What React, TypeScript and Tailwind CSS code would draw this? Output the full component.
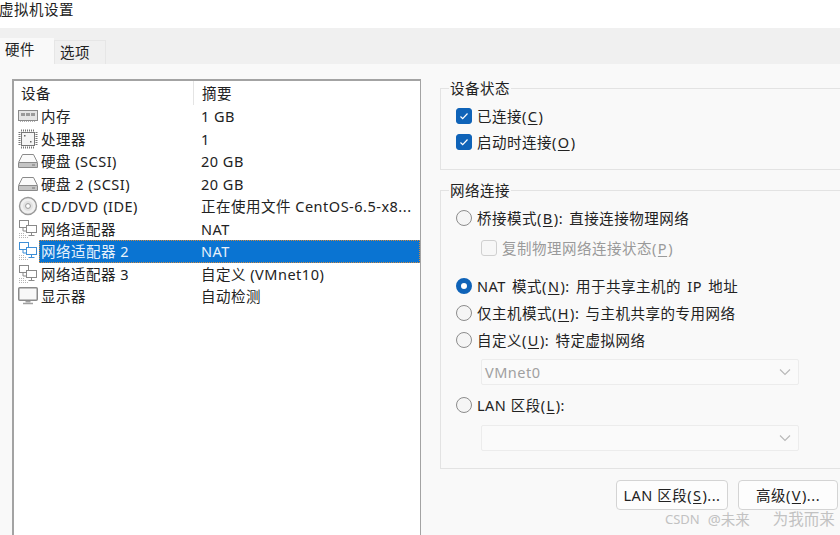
import type { ReactNode } from "react";

const FONT = "font-['Noto_Sans','Noto_Sans_CJK_SC',sans-serif]";

// ── Device icons ─────────────────────────────────────────────────────────

function MemoryIcon() {
  return (
    <svg width="20" height="14" viewBox="0 0 20 14" fill="none">
      <rect x="0.5" y="1.5" width="19" height="10" fill="#e4e4e4" stroke="#8a8a8a" />
      <rect x="3" y="4" width="4" height="3" fill="#9a9a9a" />
      <rect x="8" y="4" width="4" height="3" fill="#9a9a9a" />
      <rect x="13" y="4" width="4" height="3" fill="#9a9a9a" />
      <path d="M2 12.5h16" stroke="#b0b0b0" strokeDasharray="1 1" />
    </svg>
  );
}

function CpuIcon() {
  return (
    <svg width="20" height="20" viewBox="0 0 20 20" fill="none">
      <rect x="3.5" y="3.5" width="13" height="13" fill="#f5f5f5" stroke="#777" />
      <path d="M3 1.5h14M3 18.5h14M1.5 3v14M18.5 3v14" stroke="#777" strokeWidth="2" strokeDasharray="1 1" />
      <rect x="6" y="6" width="1.5" height="1.5" fill="#666" />
      <rect x="12" y="12" width="1.5" height="1.5" fill="#666" />
    </svg>
  );
}

function DiskIcon() {
  return (
    <svg width="20" height="16" viewBox="0 0 20 16" fill="none">
      <path d="M4.5 1.5h11l4 8v5h-19v-5z" fill="#fafafa" stroke="#8a8a8a" />
      <path d="M1 9.5h18" stroke="#8a8a8a" />
      <rect x="1" y="10" width="18" height="4" fill="#c4c4c4" />
      <path d="M14 12h3" stroke="#777" />
    </svg>
  );
}

function CdIcon() {
  return (
    <svg width="20" height="20" viewBox="0 0 20 20" fill="none">
      <circle cx="10" cy="10" r="8.5" fill="#f0f0f0" stroke="#999" strokeWidth="1.4" />
      <circle cx="10" cy="10" r="5" fill="#e2e2e2" />
      <circle cx="10" cy="10" r="2.4" fill="#fff" stroke="#999" />
    </svg>
  );
}

function NetworkIcon({ active = false }: { active?: boolean }) {
  const c = active ? "#3f8fd6" : "#8a8a8a";
  return (
    <svg width="20" height="20" viewBox="0 0 20 20" fill="none">
      <rect x="1.5" y="1.5" width="9" height="7" fill="#fff" stroke={c} />
      <rect x="8.5" y="6.5" width="10" height="7" fill="#fff" stroke={c} />
      <path d="M13.5 14v2M10.5 16.5h6" stroke={c} />
      <path d="M5 9v3h3" stroke={c} />
      <path d="M1 14.5h6M1 16.5h7M1 18.5h9" stroke="#b5b5b5" strokeDasharray="1 1" />
    </svg>
  );
}

function MonitorIcon() {
  return (
    <svg width="20" height="18" viewBox="0 0 20 18" fill="none">
      <rect x="0.75" y="0.75" width="18.5" height="12.5" rx="1" fill="#f8f8f8" stroke="#8a8a8a" strokeWidth="1.5" />
      <path d="M7.5 14h5v1.5h-5z" fill="#a0a0a0" />
      <path d="M5 16.5h10" stroke="#a0a0a0" strokeWidth="1.5" />
    </svg>
  );
}

// ── Form bits ────────────────────────────────────────────────────────────

const DEVICES = [
  { icon: <MemoryIcon />, name: "内存", summary: "1 GB" },
  { icon: <CpuIcon />, name: "处理器", summary: "1" },
  { icon: <DiskIcon />, name: "硬盘 (SCSI)", summary: "20 GB" },
  { icon: <DiskIcon />, name: "硬盘 2 (SCSI)", summary: "20 GB" },
  { icon: <CdIcon />, name: "CD/DVD (IDE)", summary: "正在使用文件 CentOS-6.5-x8..." },
  { icon: <NetworkIcon />, name: "网络适配器", summary: "NAT" },
  { icon: <NetworkIcon active />, name: "网络适配器 2", summary: "NAT", selected: true },
  { icon: <NetworkIcon />, name: "网络适配器 3", summary: "自定义 (VMnet10)" },
  { icon: <MonitorIcon />, name: "显示器", summary: "自动检测" },
];

function Checkbox({ checked, children }: { checked: boolean; children: ReactNode }) {
  return (
    <div className={`flex h-[26px] items-center gap-[5px] ${checked ? "text-[#222]" : "text-[#9a9a9a]"}`}>
      <span
        className={`flex h-[16px] w-[16px] items-center justify-center rounded-[3px] border ${
          checked ? "border-[#0f63b8] bg-[#0f63b8]" : "border-[#d0d0d0] bg-[#f7f7f7]"
        }`}
      >
        {checked && (
          <svg width="10" height="10" viewBox="0 0 10 10" fill="none">
            <path d="M1.5 5.5l2.2 2.2L8.5 2.5" stroke="#fff" strokeWidth="1.2" />
          </svg>
        )}
      </span>
      <span>{children}</span>
    </div>
  );
}

function Radio({ checked = false, children }: { checked?: boolean; children: ReactNode }) {
  return (
    <div className="flex h-[27px] items-center gap-[5px] text-[#222]">
      {checked ? (
        <span className="h-[16px] w-[16px] rounded-full border-[5px] border-[#0f63b8] bg-white" />
      ) : (
        <span className="h-[16px] w-[16px] rounded-full border border-[#8c8c8c] bg-[#f5f5f5]" />
      )}
      <span>{children}</span>
    </div>
  );
}

function Select({ value }: { value?: string }) {
  return (
    <div className="ml-[25px] flex h-[26px] w-[318px] items-center justify-between rounded-[2px] border border-[#ececec] bg-[#fafafa] pl-[3px] pr-[7px] text-[#a0a0a0]">
      <span>{value}</span>
      <svg width="12" height="8" viewBox="0 0 12 8" fill="none">
        <path d="M1 1.5l5 5 5-5" stroke="#b8b8b8" strokeWidth="1.1" />
      </svg>
    </div>
  );
}

function Accel({ children }: { children: ReactNode }) {
  return <span className="px-[1px] underline underline-offset-2">{children}</span>;
}

// ── Page ─────────────────────────────────────────────────────────────────

export default function App() {
  return (
    <div className={`relative flex h-[535px] w-[840px] flex-col overflow-hidden bg-white text-[14.5px] leading-[20px] tracking-[0.5px] text-[#222] ${FONT}`}>
      {/* Title */}
      <div className="-mt-px -ml-px flex h-[29px] shrink-0 items-start bg-white">虚拟机设置</div>

      {/* Tabs */}
      <div className="flex h-[36px] shrink-0 items-end bg-[#f0f0f0]">
        <div className="flex h-[26px] w-[54px] items-start bg-[#f9f9f9] pl-[5px] pt-[1px]">硬件</div>
        <div className="flex h-[24px] w-[52px] items-start border border-b-0 border-[#e6e6e6] bg-[#f0f0f0] pl-[5px] pt-[1px]">选项</div>
      </div>

      {/* Panel */}
      <div className="flex flex-1 bg-[#f9f9f9] pl-[12px] pt-[15px]">
        {/* Device list */}
        <div className="h-[480px] w-[409px] shrink-0 border-2 border-r border-[#a3a3a3] border-b-0 bg-white">
          <div className="flex h-[24px] items-center text-[#222]">
            <span className="w-[179px] pl-[7px]">设备</span>
            <span className="flex h-full items-center border-l border-[#e4e4e4] pl-[8px]">摘要</span>
          </div>
          {DEVICES.map((d) => (
            <div key={d.name} className="flex h-[22.5px] items-center">
              <span className="flex w-[25px] shrink-0 items-center justify-center pl-[2px]">{d.icon}</span>
              <div
                className={`flex h-full flex-1 items-center ${
                  d.selected ? "bg-[#0a74d2] text-[#e6f1fb] outline-1 -outline-offset-1 outline-dotted outline-[#d08a40]" : ""
                }`}
              >
                <span className="w-[162px] shrink-0 pl-[2px]">{d.name}</span>
                <span className="whitespace-nowrap">{d.summary}</span>
              </div>
            </div>
          ))}
        </div>

        {/* Right column */}
        <div className="ml-[19px] flex flex-1 flex-col">
          <fieldset className="-mt-[1px] -mr-px h-[92px] border border-[#e3e3e3] pl-[15px]">
            <legend className="-ml-[7px] px-[1px]">设备状态</legend>
            <div className="pt-[5px]">
              <Checkbox checked>已连接(<Accel>C</Accel>)</Checkbox>
              <Checkbox checked>启动时连接(<Accel>O</Accel>)</Checkbox>
            </div>
          </fieldset>

          <fieldset className="-mr-px mt-[10px] h-[289px] border border-[#e3e3e3] pl-[15px] [word-spacing:2px]">
            <legend className="-ml-[7px] px-[1px]">网络连接</legend>
            <div className="pt-[4px]">
              <Radio>桥接模式(<Accel>B</Accel>): 直接连接物理网络</Radio>
              <div className="ml-[25px] mt-[4px]">
                <Checkbox checked={false}>复制物理网络连接状态(<Accel>P</Accel>)</Checkbox>
              </div>
              <div className="h-[11px]" />
              <Radio checked>NAT 模式(<Accel>N</Accel>): 用于共享主机的 IP 地址</Radio>
              <Radio>仅主机模式(<Accel>H</Accel>): 与主机共享的专用网络</Radio>
              <Radio>自定义(<Accel>U</Accel>): 特定虚拟网络</Radio>
              <div className="mt-[6px]">
                <Select value="VMnet0" />
              </div>
              <div className="mt-[6px]">
                <Radio><span className="[word-spacing:0]">LAN 区段(<Accel>L</Accel>):</span></Radio>
              </div>
              <div className="mt-[7px]">
                <Select />
              </div>
            </div>
          </fieldset>

          <div className="mt-[11px] flex justify-end gap-[10px] pr-[2px]">
            <button className="h-[30px] w-[112px] rounded-[4px] border border-[#d4d4d4] bg-[#fdfdfd] text-[#222]">
              LAN 区段(<Accel>S</Accel>)...
            </button>
            <button className="h-[30px] w-[100px] rounded-[4px] border border-[#d4d4d4] bg-[#fdfdfd] text-[#222]">
              高级(<Accel>V</Accel>)...
            </button>
          </div>
        </div>
      </div>

      {/* Watermark */}
      <div className="absolute left-[665px] top-[509px] flex items-center whitespace-pre tracking-normal text-[#c2c2c2]">
        <span className="text-[13px]">CSDN</span>
        <span className="ml-[8px] text-[14.5px]">@未来</span>
        <span className="ml-[23px] text-[15.5px]">为我而来</span>
      </div>
    </div>
  );
}
